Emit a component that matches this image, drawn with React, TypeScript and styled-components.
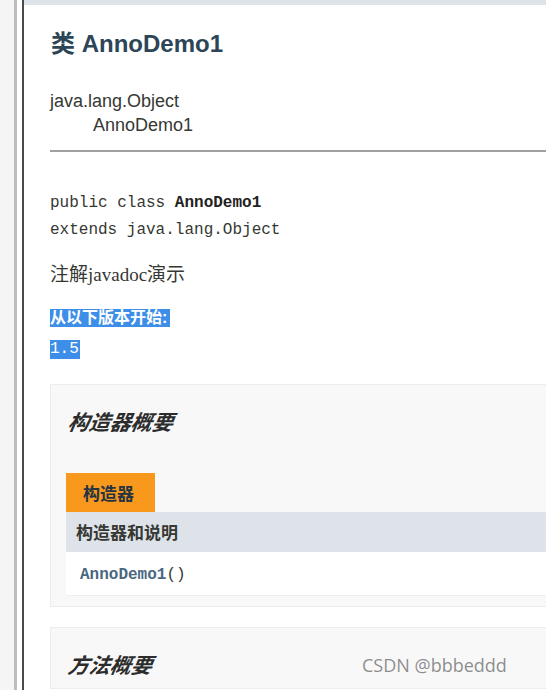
import React from "react";
import styled, { createGlobalStyle } from "styled-components";

const Global = createGlobalStyle`
  html, body { margin: 0; padding: 0; background: #ffffff; overflow: hidden; }
  #root { width: 546px; height: 690px; overflow: hidden; }
`;

const Page = styled.div`
  display: flex;
  width: 546px;
  height: 690px;
  overflow: hidden;
  position: relative;
  background: #ffffff;
`;

const Gutter = styled.div`
  width: 14px;
  flex: none;
  background: #f5f5f5;
`;

const Rule = styled.div<{ $w: number; $c: string }>`
  width: ${(p) => p.$w}px;
  flex: none;
  background: ${(p) => p.$c};
`;

const Main = styled.div`
  flex: none;
  width: 580px;
  display: flex;
  flex-direction: column;
`;

const TopStrip = styled.div`
  height: 5px;
  background: #dee3e9;
`;

const Content = styled.div`
  padding-left: 26px;
  display: flex;
  flex-direction: column;
  color: #353833;
`;

const Title = styled.h1`
  margin: 24px 0 0 1px;
  font-family: "Liberation Sans", "Noto Sans CJK SC", sans-serif;
  font-size: 24px;
  line-height: 30px;
  font-weight: 700;
  color: #2c4557;
`;

const Inherit = styled.div`
  margin-top: 30px;
  font-family: "Liberation Sans", "Noto Sans CJK SC", sans-serif;
  font-size: 18px;
  line-height: 24px;
  color: #353833;
`;

const InheritChild = styled.div`
  padding-left: 43px;
`;

const Hr = styled.div`
  margin-top: 13px;
  height: 2px;
  background: #a0a0a0;
`;

const Signature = styled.pre`
  margin: 38px 0 0 0;
  font-family: "Liberation Mono", monospace;
  font-size: 16px;
  line-height: 27px;
  color: #353833;
`;

const Strong = styled.b`
  font-weight: 700;
  color: #222;
`;

const Desc = styled.div`
  margin-top: 19px;
  font-family: "Liberation Serif", "Noto Sans CJK SC", serif;
  font-size: 19px;
  line-height: 24px;
  color: #353833;
`;

const Selected = styled.span<{ $mono?: boolean }>`
  display: inline-block;
  align-self: flex-start;
  background: #3d8ee8;
  color: #ffffff;
  font-weight: ${(p) => (p.$mono ? 400 : 700)};
  font-family: ${(p) =>
    p.$mono
      ? `"Liberation Mono", monospace`
      : `"Liberation Sans", "Noto Sans CJK SC", sans-serif`};
  font-size: 16px;
  height: ${(p) => (p.$mono ? 19 : 18)}px;
  line-height: ${(p) => (p.$mono ? 19 : 18)}px;
  padding-right: ${(p) => (p.$mono ? 1 : 3)}px;
`;

const SinceLabel = styled(Selected)`
  margin-top: 22px;
`;

const SinceValue = styled(Selected)`
  margin-top: 13px;
`;

const Summary = styled.section<{ $top: number }>`
  margin-top: ${(p) => p.$top}px;
  background: #f8f8f8;
  border: 1px solid #ededed;
  padding: 22px 0 10px 15px;
  display: flex;
  flex-direction: column;
`;

const SummaryTitle = styled.h3`
  margin: 0;
  font-family: "Noto Sans CJK SC", sans-serif;
  font-style: italic;
  font-weight: 700;
  font-size: 21px;
  line-height: 28px;
  color: #2c2c2c;
  transform: skewX(-10deg);
  transform-origin: left bottom;
`;

const Table = styled.div`
  margin-top: 38px;
  display: flex;
  flex-direction: column;
`;

const Tab = styled.div`
  align-self: flex-start;
  width: 72px;
  height: 39px;
  padding-left: 17px;
  background: #f8981d;
  font-family: "Noto Sans CJK SC", sans-serif;
  font-weight: 700;
  font-size: 17px;
  line-height: 39px;
  color: #253441;
`;

const HeaderRow = styled.div`
  height: 40px;
  padding-left: 10px;
  background: #dee3e9;
  font-family: "Noto Sans CJK SC", sans-serif;
  font-weight: 700;
  font-size: 17px;
  line-height: 40px;
  color: #353833;
`;

const BodyRow = styled.div`
  height: 43px;
  padding-left: 14px;
  background: #ffffff;
  border-bottom: 1px solid #eeeeee;
  font-family: "Liberation Mono", monospace;
  font-size: 16px;
  line-height: 47px;
  color: #353833;
`;

const Link = styled.span`
  color: #4a6782;
  font-weight: 700;
`;

const Watermark = styled.div`
  position: absolute;
  left: 362px;
  top: 653px;
  font-family: "Open Sans", sans-serif;
  font-size: 18px;
  line-height: 24px;
  color: rgba(120, 120, 120, 0.85);
`;

export default function App() {
  return (
    <>
      <Global />
      <Page>
        <Gutter />
        <Rule $w={3} $c="#bdbdbd" />
        <Rule $w={5} $c="#ffffff" />
        <Rule $w={2} $c="#4a4a4a" />
        <Main>
          <TopStrip />
          <Content>
            <Title>类 AnnoDemo1</Title>
            <Inherit>
              <div>java.lang.Object</div>
              <InheritChild>AnnoDemo1</InheritChild>
            </Inherit>
            <Hr />
            <Signature>
              public class <Strong>AnnoDemo1</Strong>
              {"\n"}extends java.lang.Object
            </Signature>
            <Desc>注解javadoc演示</Desc>
            <SinceLabel>从以下版本开始:</SinceLabel>
            <SinceValue $mono>1.5</SinceValue>
            <Summary $top={25}>
              <SummaryTitle>构造器概要</SummaryTitle>
              <Table>
                <Tab>构造器</Tab>
                <HeaderRow>构造器和说明</HeaderRow>
                <BodyRow>
                  <Link>AnnoDemo1</Link>()
                </BodyRow>
              </Table>
            </Summary>
            <Summary $top={20}>
              <SummaryTitle>方法概要</SummaryTitle>
            </Summary>
          </Content>
        </Main>
        <Watermark>CSDN @bbbeddd</Watermark>
      </Page>
    </>
  );
}
